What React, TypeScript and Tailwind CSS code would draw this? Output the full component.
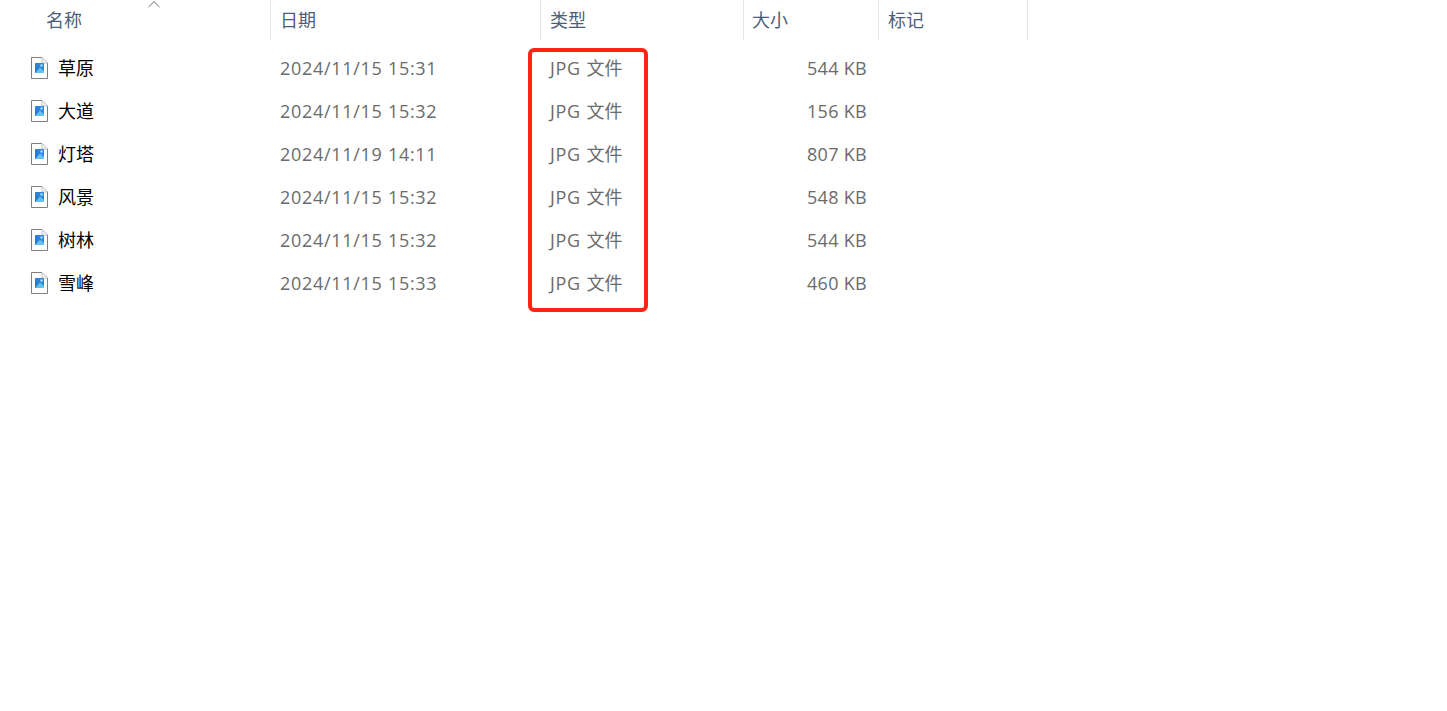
const rows = [
  ["草原", "2024/11/15 15:31", "544 KB"],
  ["大道", "2024/11/15 15:32", "156 KB"],
  ["灯塔", "2024/11/19 14:11", "807 KB"],
  ["风景", "2024/11/15 15:32", "548 KB"],
  ["树林", "2024/11/15 15:32", "544 KB"],
  ["雪峰", "2024/11/15 15:33", "460 KB"],
];

function FileIcon() {
  return (
    <svg width="17" height="22" viewBox="0 0 17 22" className="mb-px block">
      <defs>
        <linearGradient id="pic" x1="0" y1="1" x2="1" y2="0">
          <stop offset="0" stopColor="#2a6fd8" />
          <stop offset="1" stopColor="#2f8fe8" />
        </linearGradient>
      </defs>
      <path d="M0.5 0.5H11L16.5 6V21.5H0.5Z" fill="#ffffff" stroke="#808080" />
      <path d="M11 0.5V6H16.5" fill="#f4f4f4" stroke="#c4c4c4" />
      <rect x="4" y="6" width="9" height="10" rx="0.5" fill="url(#pic)" />
      <path d="M4.5 15.5L9 10.5L13 14V16H4.5Z" fill="#63c0f2" />
      <rect x="9.5" y="7.5" width="2" height="2" fill="#cfeafc" />
    </svg>
  );
}

const font = "[font-family:'Open_Sans','Noto_Sans_CJK_SC',sans-serif]";

export default function App() {
  return (
    <div className={`relative h-[711px] w-[1447px] overflow-hidden bg-white text-[18px] ${font}`}>
      <div className="relative flex h-10 text-[#4c607a]">
        <div className="w-[271px] border-r border-[#e5e5e5] pl-[46px] leading-[41px]">名称</div>
        <div className="w-[270px] border-r border-[#e5e5e5] pl-[9px] leading-[41px]">日期</div>
        <div className="w-[203px] border-r border-[#e5e5e5] pl-[9px] leading-[41px]">类型</div>
        <div className="w-[135px] border-r border-[#e5e5e5] pl-2 leading-[41px]">大小</div>
        <div className="w-[149px] border-r border-[#e5e5e5] pl-[9px] leading-[41px]">标记</div>
        <svg width="12" height="7" viewBox="0 0 12 7" className="absolute left-[148px] top-px">
          <path d="M0.5 6L6 0.7L11.5 6" fill="none" stroke="#6f6f6f" />
        </svg>
      </div>
      <div className="pt-[7px]">
        {rows.map(([name, date, size]) => (
          <div key={name} className="flex h-[43px] items-center">
            <div className="flex w-[271px] items-center pl-[31px] text-black">
              <FileIcon />
              <span className="ml-[10px]">{name}</span>
            </div>
            <div className="w-[270px] pl-[9px] tracking-[0.7px] text-[#6b6b6b]">{date}</div>
            <div className="w-[203px] pl-[9px] text-[#6b6b6b]">
              <span className="tracking-[0.7px]">JPG</span>
              <span className="ml-px"> 文件</span>
            </div>
            <div className="w-[123px] text-right tracking-[0.3px] text-[#6b6b6b]">{size}</div>
          </div>
        ))}
      </div>
      <div className="absolute left-[528px] top-[48px] h-[264px] w-[120px] rounded-[6px] border-4 border-[#ff2414]" />
    </div>
  );
}
